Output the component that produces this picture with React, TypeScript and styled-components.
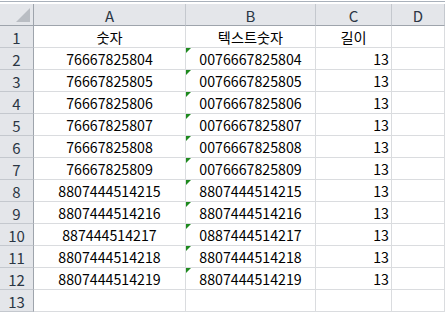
import styled, { createGlobalStyle } from "styled-components";

const GlobalStyle = createGlobalStyle`
  html, body {
    margin: 0;
    padding: 0;
    background: #ffffff;
  }
`;

interface Row {
  num: string;
  text: string;
  len: string;
}

const rows: Row[] = [
  { num: "76667825804", text: "0076667825804", len: "13" },
  { num: "76667825805", text: "0076667825805", len: "13" },
  { num: "76667825806", text: "0076667825806", len: "13" },
  { num: "76667825807", text: "0076667825807", len: "13" },
  { num: "76667825808", text: "0076667825808", len: "13" },
  { num: "76667825809", text: "0076667825809", len: "13" },
  { num: "8807444514215", text: "8807444514215", len: "13" },
  { num: "8807444514216", text: "8807444514216", len: "13" },
  { num: "887444514217", text: "0887444514217", len: "13" },
  { num: "8807444514218", text: "8807444514218", len: "13" },
  { num: "8807444514219", text: "8807444514219", len: "13" },
];

const columns = ["A", "B", "C", "D"];

export default function App(): JSX.Element {
  return (
    <Root>
      <GlobalStyle />
      <TopEdge />
      <Sheet>
        <Corner>
          <CornerMark />
        </Corner>
        {columns.map((c) => (
          <ColumnHeader key={c}>{c}</ColumnHeader>
        ))}

        <RowHeader>1</RowHeader>
        <Cell align="center">숫자</Cell>
        <Cell align="center">텍스트숫자</Cell>
        <Cell align="center">길이</Cell>
        <Cell />

        {rows.map((r, i) => (
          <RowGroup key={r.text} row={i + 2} data={r} />
        ))}

        <RowHeader>13</RowHeader>
        <Cell />
        <Cell />
        <Cell />
        <Cell />
      </Sheet>
    </Root>
  );
}

function RowGroup({ row, data }: { row: number; data: Row }): JSX.Element {
  return (
    <>
      <RowHeader>{row}</RowHeader>
      <Cell align="center">{data.num}</Cell>
      <Cell align="center">
        <TextFlag />
        {data.text}
      </Cell>
      <Cell align="right">{data.len}</Cell>
      <Cell />
    </>
  );
}

const Root = styled.div`
  width: 445px;
  height: 315px;
  overflow: hidden;
  background: #ffffff;
  font-family: "Noto Sans CJK KR", "Noto Sans", sans-serif;
`;

const TopEdge = styled.div`
  box-sizing: border-box;
  height: 4px;
  border-top: 1px solid #ffffff;
  background: #ffffff;

  &::after {
    content: "";
    display: block;
    height: 1px;
    background: #a9b1bb;
  }
`;

const Sheet = styled.div`
  display: grid;
  grid-template-columns: 34px 152px 130px 76px 1fr;
  grid-auto-rows: 22px;
`;

const HeaderBase = styled.div`
  box-sizing: border-box;
  display: flex;
  align-items: center;
  justify-content: center;
  background: #e4e6ea;
  color: #2b3644;
  font-size: 15px;
  line-height: 1;
`;

const Corner = styled(HeaderBase)`
  position: relative;
  border-right: 1px solid #9ea4ac;
  border-bottom: 1px solid #9ea4ac;
`;

const CornerMark = styled.div`
  position: absolute;
  right: 3px;
  bottom: 3px;
  width: 0;
  height: 0;
  border-left: 14px solid transparent;
  border-bottom: 14px solid #b9bdc3;
`;

const ColumnHeader = styled(HeaderBase)`
  border-right: 1px solid #c4c8ce;
  border-bottom: 1px solid #9ea4ac;
  padding-top: 1px;
`;

const RowHeader = styled(HeaderBase)`
  border-right: 1px solid #9ea4ac;
  border-bottom: 1px solid #c4c8ce;
  padding-top: 1px;
`;

const Cell = styled.div<{ align?: "center" | "right" }>`
  box-sizing: border-box;
  position: relative;
  display: flex;
  align-items: center;
  justify-content: ${(p) => (p.align === "right" ? "flex-end" : "center")};
  padding: 1px 2px 0 2px;
  border-right: 1px solid #dadcdf;
  border-bottom: 1px solid #dadcdf;
  color: #000000;
  font-size: 14.2px;
  line-height: 1;
  white-space: nowrap;
`;

const TextFlag = styled.span`
  position: absolute;
  left: 0;
  top: 0;
  width: 0;
  height: 0;
  border-top: 5px solid #1e8a1e;
  border-right: 5px solid transparent;
`;
